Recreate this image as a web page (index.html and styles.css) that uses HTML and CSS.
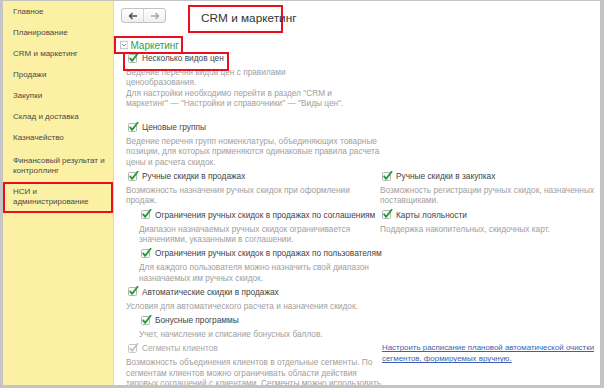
FILE: index.html
```html
<!DOCTYPE html>
<html lang="ru">
<head>
    <meta charset="utf-8">
    <title>CRM и маркетинг</title>
    <link rel="stylesheet" href="styles.css">
</head>
<body>
    <svg class="defs" width="0" height="0">
        <symbol id="chk" viewBox="0 0 11 11">
            <rect x="0.5" y="1.5" width="8" height="8" rx="1" fill="#fbfbfb" stroke="#b4b4b4"/>
            <path d="M2.2 5.4 L4.1 7.9 L9.6 0.8" fill="none" stroke="#1f9c34" stroke-width="1.8" stroke-linecap="round" stroke-linejoin="round"/>
        </symbol>
        <symbol id="chk-off" viewBox="0 0 11 11">
            <rect x="0.5" y="1.5" width="8" height="8" rx="1" fill="#fbfbfb" stroke="#c8c8c8"/>
            <path d="M2.2 5.4 L4.1 7.9 L9.6 0.8" fill="none" stroke="#b8b8b8" stroke-width="1.4" stroke-linecap="round" stroke-linejoin="round"/>
        </symbol>
    </svg>
    <div class="window">
        <nav class="sections">
            <div class="section-item">Главное</div>
            <div class="section-item">Планирование</div>
            <div class="section-item">CRM и маркетинг</div>
            <div class="section-item">Продажи</div>
            <div class="section-item">Закупки</div>
            <div class="section-item">Склад и доставка</div>
            <div class="section-item">Казначейство</div>
            <div class="section-item two-lines">Финансовый результат и<br>контроллинг</div>
            <div class="section-item active">НСИ и<br>администрирование</div>
        </nav>
        <main class="content">
            <div class="header">
                <div class="nav-buttons">
                    <span class="nav-btn">
                        <svg width="10" height="8" viewBox="0 0 10 8"><path d="M9 4 H2 M4.5 1 L1.5 4 L4.5 7" fill="none" stroke="#505050" stroke-width="1.4"/></svg>
                    </span>
                    <span class="nav-btn">
                        <svg width="10" height="8" viewBox="0 0 10 8"><path d="M1 4 H8 M5.5 1 L8.5 4 L5.5 7" fill="none" stroke="#a8a8a8" stroke-width="1.4"/></svg>
                    </span>
                </div>
                <h1 class="title">CRM и маркетинг</h1>
            </div>

            <div class="group-title">
                <svg class="collapse" width="10" height="10" viewBox="0 0 10 10"><rect x="0.5" y="0.5" width="9" height="9" fill="#fff" stroke="#b8b8b8"/><path d="M2.5 3.8 L5 6.3 L7.5 3.8" fill="none" stroke="#666" stroke-width="1"/></svg>
                Маркетинг
            </div>

            <div class="options">
                <div class="option first">
                    <div class="label marked"><svg class="check"><use href="#chk"/></svg>Несколько видов цен</div>
                    <div class="desc">Ведение перечня видов цен с правилами<br>ценообразования.<br>Для настройки необходимо перейти в раздел "CRM и<br>маркетинг" — "Настройки и справочники" — "Виды цен".</div>
                </div>
                <div class="option">
                    <div class="label"><svg class="check"><use href="#chk"/></svg>Ценовые группы</div>
                    <div class="desc">Ведение перечня групп номенклатуры, объединяющих товарные<br>позиции, для которых применяются одинаковые правила расчета<br>цены и расчета скидок.</div>
                </div>

                <div class="columns">
                    <div class="column">
                        <div class="option">
                            <div class="label"><svg class="check"><use href="#chk"/></svg>Ручные скидки в продажах</div>
                            <div class="desc">Возможность назначения ручных скидок при оформлении<br>продаж.</div>
                        </div>
                        <div class="option nested">
                            <div class="label"><svg class="check"><use href="#chk"/></svg>Ограничения ручных скидок в продажах по соглашениям</div>
                            <div class="desc">Диапазон назначаемых ручных скидок ограничивается<br>значениями, указанными в соглашении.</div>
                        </div>
                        <div class="option nested">
                            <div class="label"><svg class="check"><use href="#chk"/></svg>Ограничения ручных скидок в продажах по пользователям</div>
                            <div class="desc">Для каждого пользователя можно назначить свой диапазон<br>назначаемых им ручных скидок.</div>
                        </div>
                        <div class="option">
                            <div class="label"><svg class="check"><use href="#chk"/></svg>Автоматические скидки в продажах</div>
                            <div class="desc">Условия для автоматического расчета и назначения скидок.</div>
                        </div>
                        <div class="option nested">
                            <div class="label"><svg class="check"><use href="#chk"/></svg>Бонусные программы</div>
                            <div class="desc">Учет, начисление и списание бонусных баллов.</div>
                        </div>
                    </div>
                    <div class="column">
                        <div class="option">
                            <div class="label"><svg class="check"><use href="#chk"/></svg>Ручные скидки в закупках</div>
                            <div class="desc">Возможность регистрации ручных скидок, назначенных<br>поставщиками.</div>
                        </div>
                        <div class="option">
                            <div class="label"><svg class="check"><use href="#chk"/></svg>Карты лояльности</div>
                            <div class="desc">Поддержка накопительных, скидочных карт.</div>
                        </div>
                    </div>
                </div>

                <div class="columns">
                    <div class="column">
                        <div class="option">
                            <div class="label disabled"><svg class="check"><use href="#chk-off"/></svg>Сегменты клиентов</div>
                            <div class="desc">Возможность объединения клиентов в отдельные сегменты. По<br>сегментам клиентов можно ограничивать области действия<br>типовых соглашений с клиентами. Сегменты можно использовать</div>
                        </div>
                    </div>
                    <div class="column">
                        <a class="link" href="#">Настроить расписание плановой автоматической очистки<br>сегментов, формируемых вручную.</a>
                    </div>
                </div>
            </div>
        </main>
    </div>
</body>
</html>
```

FILE: styles.css
```css
body {
    margin: 0;
    background-color: #c4c4c4;
    font-family: "Liberation Sans", Arial, sans-serif;
}

.defs {
    position: absolute;
}

.window {
    display: flex;
    width: 597px;
    height: 384px;
    margin: 1px 0 0 3px;
    background-color: #ffffff;
    overflow: hidden;
}

/* left sections panel */
.sections {
    width: 110px;
    flex-shrink: 0;
    padding-top: 1px;
    background-color: #fcf0a4;
    border-right: 1px solid #e8dc98;
}

.section-item {
    padding: 5px 10px 6px;
    font-size: 8px;
    line-height: 10px;
    color: #4a4a4a;
    white-space: nowrap;
}

.section-item.two-lines {
    padding-top: 7px;
    padding-bottom: 4px;
}

.section-item.active {
    margin-top: 2px;
    box-shadow: inset 0 0 0 2px #e8101e;
}

/* main form */
.content {
    flex: 1;
    min-width: 0;
}

.header {
    display: flex;
    align-items: flex-start;
    padding: 4px 0 0 7px;
}

.nav-buttons {
    display: flex;
    margin-top: 3px;
    border: 1px solid #c2c2c2;
    border-radius: 3px;
    background: linear-gradient(#ffffff, #efefef);
}

.nav-btn {
    display: flex;
    align-items: center;
    justify-content: center;
    width: 21px;
    height: 13px;
}

.nav-btn + .nav-btn {
    border-left: 1px solid #d6d6d6;
}

.title {
    margin: 0 0 0 22px;
    width: 80px;
    height: 24px;
    padding: 0 0 0 11px;
    border: 2px solid #e8101e;
    font-size: 11.8px;
    font-weight: normal;
    line-height: 22px;
    color: #333333;
    white-space: nowrap;
}

.group-title {
    display: flex;
    align-items: center;
    gap: 2px;
    width: 59px;
    height: 14px;
    margin-top: 3px;
    padding: 0 2px 0 4px;
    border: 2px solid #e8101e;
    font-size: 10px;
    color: #2f9e4c;
}

.options {
    margin-top: -2px;
    padding-left: 12px;
}

.option {
    margin-bottom: 3px;
}

.option.first {
    margin-bottom: 13px;
}

.option.nested {
    margin-left: 13px;
}

.label {
    display: flex;
    align-items: center;
    height: 12px;
    padding-left: 2px;
    font-size: 8.3px;
    color: #444444;
    white-space: nowrap;
    position: relative;
}

.label.disabled {
    color: #a8a8a8;
}

.label.marked::after {
    content: "";
    position: absolute;
    left: -3px;
    top: 0;
    width: 102px;
    height: 15px;
    border: 2px solid #e8101e;
}

.check {
    width: 11px;
    height: 11px;
    margin-right: 3px;
    flex-shrink: 0;
}

.desc {
    margin-top: 3px;
    font-size: 8.3px;
    line-height: 10.3px;
    color: #a0a0a0;
    white-space: nowrap;
}

.columns {
    display: grid;
    grid-template-columns: 254px 1fr;
}

.link {
    display: block;
    padding-left: 2px;
    font-size: 7.9px;
    line-height: 11px;
    color: #3d5fae;
    white-space: nowrap;
}
```
